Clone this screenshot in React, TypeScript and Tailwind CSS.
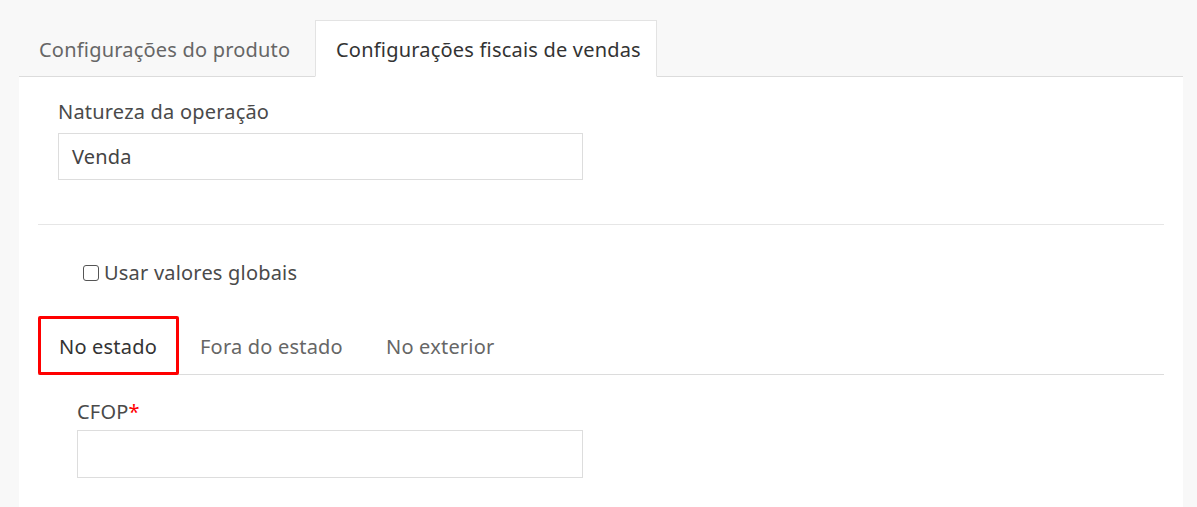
export default function App() {
  const font = { fontFamily: '"Noto Sans", "Open Sans", sans-serif' };
  return (
    <div className="w-[1197px] h-[507px] bg-[#f8f8f8] overflow-hidden" style={font}>
      <div className="pt-5 pl-[19px] pr-[14px]">
        <div className="flex items-end h-14">
          <div className="h-full px-5 pt-[3px] flex items-center text-[20px] tracking-[0.2px] text-[#666] mr-[2px] w-[294px] whitespace-nowrap">
            Configurações do produto
          </div>
          <div className="h-[57px] -mb-px px-5 pt-[3px] flex items-center text-[20px] tracking-[0.2px] text-[#333] bg-white border border-[#e3e3e3] border-b-white relative z-10 w-[342px] whitespace-nowrap">
            Configurações fiscais de vendas
          </div>
        </div>
        <div className="bg-white border-t border-[#dcdcdc] h-[440px] px-[19px]">
          <div className="px-5 pt-[23px]">
            <label className="block text-[20px] tracking-[0.2px] text-[#4a4a4a] leading-6">Natureza da operação</label>
            <div className="mt-[9px] w-[525px] h-[47px] border border-[#dddddd] flex items-center px-[13px] pt-px text-[20px] tracking-[0.2px] text-[#444]">
              Venda
            </div>
          </div>
          <div className="mt-[44px] border-t border-[#e6e6e6]" />
          <div className="mt-[36px] pl-[45px] flex items-center gap-[5px] text-[20px] tracking-[0.2px] text-[#4a4a4a] h-6">
            <span className="w-4 h-4 border border-[#555] rounded-[3px] bg-white -mt-px" />
            Usar valores globais
          </div>
          <div className="mt-[31px] flex items-stretch border-b border-[#dcdcdc] h-[59px]">
            <div className="w-[141px] border-[3px] border-[#ff0000] rounded-[2px] flex items-center pl-[18px] pt-[3px] text-[20px] tracking-[0.2px] text-[#333] -mb-px whitespace-nowrap">
              No estado
            </div>
            <div className="flex items-center pl-[21px] pt-[4px] w-[207px] text-[20px] tracking-[0.2px] text-[#666] whitespace-nowrap">Fora do estado</div>
            <div className="flex items-center pt-[4px] text-[20px] tracking-[0.2px] text-[#666] whitespace-nowrap">No exterior</div>
          </div>
          <div className="pl-[39px] pt-[25px]">
            <label className="block text-[20px] tracking-[0.2px] text-[#4a4a4a] leading-6">
              CFOP<span className="text-[#ff0000]">*</span>
            </label>
            <div className="mt-[6px] w-[506px] h-[48px] border border-[#dddddd]" />
          </div>
        </div>
      </div>
    </div>
  );
}
